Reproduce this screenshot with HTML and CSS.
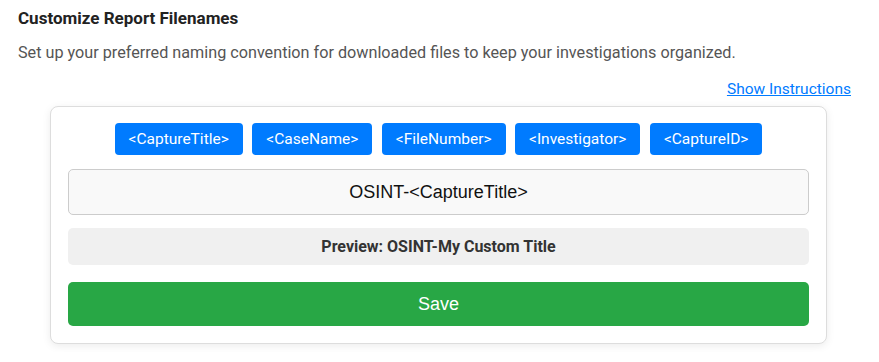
FILE: index.html
```html
<!DOCTYPE html>
<html>
<head>
<meta charset="utf-8">
<link rel="stylesheet" href="styles.css">
</head>
<body>
<div class="page">
  <h2 class="title">Customize Report Filenames</h2>
  <p class="desc">Set up your preferred naming convention for downloaded files to keep your investigations organized.</p>
  <div class="link-row"><a href="#" class="link">Show Instructions</a></div>
  <div class="card">
    <div class="chips">
      <button class="chip">&lt;CaptureTitle&gt;</button>
      <button class="chip">&lt;CaseName&gt;</button>
      <button class="chip">&lt;FileNumber&gt;</button>
      <button class="chip">&lt;Investigator&gt;</button>
      <button class="chip">&lt;CaptureID&gt;</button>
    </div>
    <input class="field" type="text" value="OSINT-<CaptureTitle>">
    <div class="preview">Preview: OSINT-My Custom Title</div>
    <button class="save">Save</button>
  </div>
</div>
</body>
</html>
```
FILE: styles.css
```css
html, body {
  margin: 0;
  padding: 0;
  background: #fff;
}
.page {
  padding: 8px 20px 8px 18px;
  font-family: Roboto, "Liberation Sans", sans-serif;
}
.title {
  margin: 0;
  font-size: 17px;
  font-weight: 700;
  line-height: 20px;
  color: #222;
}
.desc {
  margin: 15px 0 0;
  font-size: 16.2px;
  line-height: 20px;
  color: #555;
}
.link-row {
  display: flex;
  justify-content: flex-end;
  margin-top: 16px;
  padding-right: 8px;
}
.link {
  color: #007bff;
  font-size: 15.5px;
  line-height: 20px;
  text-decoration: underline;
}
.card {
  width: 741px;
  margin: 7px auto 0;
  padding: 16px 17px 17px;
  border: 1px solid #ddd;
  border-radius: 8px;
  box-shadow: 0 2px 8px rgba(0,0,0,0.08);
  background: #fff;
}
.chips {
  display: flex;
  justify-content: center;
  gap: 9.5px;
}
.chip {
  height: 32px;
  padding: 0 14px;
  border: none;
  border-radius: 4px;
  background: #007bff;
  color: #fff;
  font-family: Roboto, "Liberation Sans", sans-serif;
  font-size: 15.5px;
}
.field {
  display: block;
  box-sizing: border-box;
  width: 100%;
  height: 46px;
  margin-top: 14px;
  border: 1px solid #ccc;
  border-radius: 5px;
  background: #f9f9f9;
  text-align: center;
  font-family: "Liberation Sans", Arial, sans-serif;
  font-size: 18px;
  color: #111;
}
.preview {
  margin-top: 13px;
  height: 37px;
  line-height: 37px;
  background: #f0f0f0;
  border-radius: 5px;
  text-align: center;
  font-weight: 700;
  font-size: 16px;
  color: #333;
}
.save {
  display: block;
  width: 100%;
  height: 44px;
  margin-top: 17px;
  border: none;
  border-radius: 5px;
  background: #28a745;
  color: #fff;
  font-family: "Liberation Sans", Arial, sans-serif;
  font-size: 18px;
}
```
